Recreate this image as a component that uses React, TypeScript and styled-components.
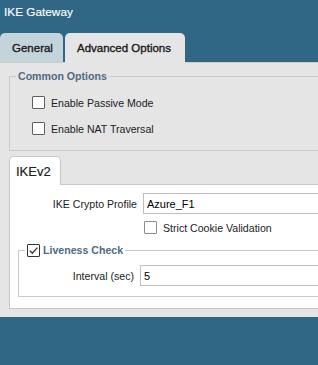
import React from "react";
import styled, { createGlobalStyle } from "styled-components";

const Global = createGlobalStyle`
  html, body {
    margin: 0;
    padding: 0;
    overflow: hidden;
    background: #2f6784;
  }
  * { box-sizing: border-box; }
`;

const Dialog = styled.div`
  width: 318px;
  height: 365px;
  overflow: hidden;
  background: #2f6784;
  font-family: "Liberation Sans", Arial, sans-serif;
  display: flex;
  flex-direction: column;
`;

const TitleBar = styled.div`
  height: 33px;
  padding: 5px 0 0 4px;
  color: #ffffff;
  font-size: 11.8px;
  line-height: 15px;
  -webkit-text-stroke: 0.15px #ffffff;
`;

const TabRow = styled.div`
  display: flex;
  gap: 2px;
  height: 29px;
`;

const Tab = styled.div<{ $active?: boolean; $width: number }>`
  width: ${(p) => p.$width}px;
  height: ${(p) => (p.$active ? 30 : 29)}px;
  margin-bottom: ${(p) => (p.$active ? -1 : 0)}px;
  position: relative;
  z-index: 1;
  padding-left: 12px;
  display: flex;
  align-items: center;
  padding-bottom: ${(p) => (p.$active ? 1 : 0)}px;
  border-radius: 5px 5px 0 0;
  background: ${(p) => (p.$active ? "#e5e5e5" : "#c4d4db")};
  color: #1b1b1b;
  font-size: 11.5px;
  -webkit-text-stroke: 0.35px #1b1b1b;
  white-space: nowrap;
`;

const Panel = styled.div`
  background: #e5e5e5;
  border-top: 1px solid #cdcdcd;
  padding: 7px 0 8px 0;
  display: flex;
  flex-direction: column;
`;

const Group = styled.fieldset<{ $inset: number }>`
  margin: 0 0 0 ${(p) => p.$inset}px;
  border: 1px solid #c9c9c9;
  border-right: none;
  padding: 0 0 0 6px;
  min-width: 0;
`;

const Legend = styled.legend`
  padding: 0 2px;
  font-size: 10.6px;
  line-height: 13px;
  font-weight: bold;
  color: #4e6b82;
  display: flex;
  align-items: center;
  gap: 3px;
`;

const CommonBody = styled.div`
  padding: 13px 0 15px 16px;
  display: flex;
  flex-direction: column;
  gap: 13px;
`;

const CheckRow = styled.label<{ $indent?: number }>`
  display: flex;
  align-items: center;
  gap: 6px;
  height: 13px;
  margin-left: ${(p) => p.$indent ?? 0}px;
  font-size: 10.6px;
  color: #222;
`;

const Box = styled.span<{ $tone?: string }>`
  width: 13px;
  height: 13px;
  flex: none;
  border: 1px solid ${(p) => p.$tone ?? "#5f5f5f"};
  border-radius: 1px;
  background: #ffffff;
  display: flex;
  align-items: center;
  justify-content: center;
`;

const SubTabRow = styled.div`
  display: flex;
  margin: 5px 0 0 9px;
`;

const SubTab = styled.div`
  width: 52px;
  height: 29px;
  margin-bottom: -1px;
  position: relative;
  z-index: 1;
  background: #ffffff;
  border: 1px solid #c8c8c8;
  border-bottom: none;
  border-radius: 5px 5px 0 0;
  padding: 0 0 0 6px;
  display: flex;
  align-items: center;
  font-size: 13px;
  color: #222;
  -webkit-text-stroke: 0.2px #222;
`;

const WhitePanel = styled.div`
  margin-left: 9px;
  background: #ffffff;
  border: 1px solid #c8c8c8;
  border-right: none;
  padding: 8px 0 11px 0;
  display: flex;
  flex-direction: column;
`;

const FieldRow = styled.div<{ $labelWidth: number }>`
  display: flex;
  align-items: center;
  gap: 6px;
  & > span {
    width: ${(p) => p.$labelWidth}px;
    flex: none;
    text-align: right;
    font-size: 10.6px;
    color: #222;
    white-space: nowrap;
  }
`;

const Input = styled.div`
  flex: 1;
  height: 21px;
  border: 1px solid #bdbdbd;
  border-right: none;
  background: #ffffff;
  padding-left: 3px;
  display: flex;
  align-items: center;
  font-size: 11px;
  color: #000;
`;

const Spacer = styled.div<{ $h: number }>`
  height: ${(p) => p.$h}px;
`;

const LivenessBody = styled.div`
  padding: 8px 0 10px 0;
`;

const Check = () => (
  <svg width="11" height="11" viewBox="0 0 11 11">
    <polyline points="1.8,5.6 4.3,8.2 9.4,2.6" fill="none" stroke="#333" strokeWidth="1.3" />
  </svg>
);

export default function App() {
  return (
    <>
      <Global />
      <Dialog>
        <TitleBar>IKE Gateway</TitleBar>
        <TabRow>
          <Tab $width={63}>General</Tab>
          <Tab $width={120} $active>Advanced Options</Tab>
        </TabRow>
        <Panel>
          <Group $inset={9}>
            <Legend>Common Options</Legend>
            <CommonBody>
              <CheckRow>
                <Box />
                Enable Passive Mode
              </CheckRow>
              <CheckRow>
                <Box />
                Enable NAT Traversal
              </CheckRow>
            </CommonBody>
          </Group>
          <SubTabRow>
            <SubTab>IKEv2</SubTab>
          </SubTabRow>
          <WhitePanel>
            <FieldRow $labelWidth={127}>
              <span>IKE Crypto Profile</span>
              <Input>Azure_F1</Input>
            </FieldRow>
            <Spacer $h={7} />
            <CheckRow $indent={134}>
              <Box $tone="#8c8c8c" />
              Strict Cookie Validation
            </CheckRow>
            <Spacer $h={10} />
            <Group $inset={8}>
              <Legend>
                <Box $tone="#333">
                  <Check />
                </Box>
                Liveness Check
              </Legend>
              <LivenessBody>
                <FieldRow $labelWidth={109}>
                  <span>Interval (sec)</span>
                  <Input>5</Input>
                </FieldRow>
              </LivenessBody>
            </Group>
          </WhitePanel>
        </Panel>
      </Dialog>
    </>
  );
}
